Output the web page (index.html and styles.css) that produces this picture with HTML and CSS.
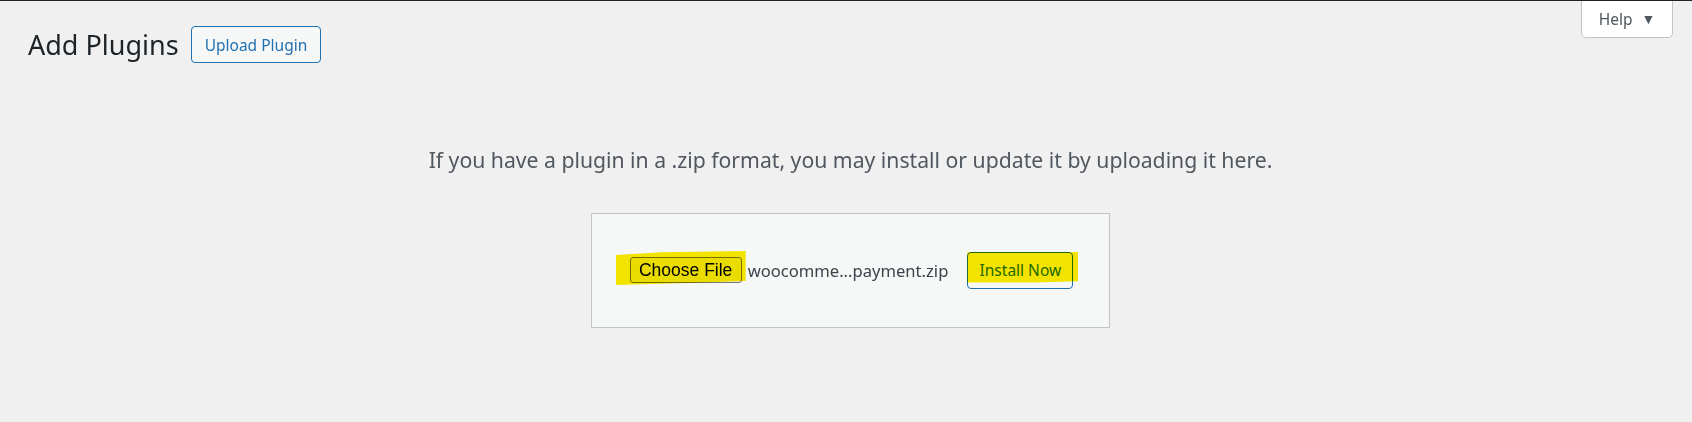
FILE: index.html
```html
<!DOCTYPE html>
<html lang="en">

<head>
    <meta charset="UTF-8">
    <meta name="viewport" content="width=device-width, initial-scale=1.0">
    <title>Add Plugins</title>
    <link rel="stylesheet" href="styles.css">
</head>

<body>
    <div class="admin_bar"></div>
    <main class="wrap">
        <div class="top_row">
            <div class="title_group">
                <h1 class="page_title">Add Plugins</h1>
                <a class="title_action" href="#">Upload Plugin</a>
            </div>
            <button class="help_tab">Help <span class="arrow">&#9660;</span></button>
        </div>
        <p class="install_help">If you have a plugin in a .zip format, you may install or update it by uploading it here.</p>
        <div class="upload_form">
            <span class="mark_wrap">
                <button class="choose_file">Choose File</button>
                <span class="marker marker_file"></span>
            </span>
            <span class="file_name">woocomme...payment.zip</span>
            <span class="mark_wrap">
                <button class="install_now">Install Now</button>
                <span class="marker marker_install"></span>
            </span>
        </div>
    </main>
</body>

</html>
```

FILE: styles.css
```css
html {
    margin: 0;
    padding: 0;
    background-color: #f0f0f1;
}

body {
    margin: 0;
    font-family: "Noto Sans", "Open Sans", sans-serif;
    color: #3c434a;
}

.admin_bar {
    height: 1px;
    background-color: #1d2327;
}

.wrap {
    padding: 0 19px 0 28px;
}

.top_row {
    display: flex;
    justify-content: space-between;
    align-items: flex-start;
}

.title_group {
    display: flex;
    align-items: center;
    gap: 12px;
    margin-top: 25px;
}

.page_title {
    margin: 0;
    font-size: 27px;
    font-weight: 400;
    color: #1d2327;
    line-height: 37px;
}

.title_action {
    display: inline-flex;
    align-items: center;
    box-sizing: border-box;
    height: 37px;
    padding: 0 13px;
    font-size: 15.5px;
    color: #2271b1;
    text-decoration: none;
    background-color: #f6f7f7;
    border: 1px solid #2271b1;
    border-radius: 4px;
}

.help_tab {
    box-sizing: border-box;
    width: 92px;
    height: 37px;
    padding: 0;
    font-family: inherit;
    font-size: 15.5px;
    color: #50575e;
    background-color: #fff;
    border: 1px solid #c3c4c7;
    border-top: 0;
    border-radius: 0 0 5px 5px;
}

.help_tab .arrow {
    margin-left: 5px;
    font-size: 14px;
    color: #50575e;
    vertical-align: 1px;
}

.install_help {
    margin: 82px 0 0;
    text-align: center;
    font-size: 21.2px;
    line-height: 30px;
    color: #50575e;
}

.upload_form {
    display: flex;
    align-items: center;
    width: fit-content;
    margin: 38px auto 0;
    padding: 37px 36px 38px 38px;
    background-color: #f6f7f7;
    border: 1px solid #c3c4c7;
    height: 38px;
}

.mark_wrap {
    position: relative;
    display: inline-flex;
}

.choose_file {
    box-sizing: border-box;
    width: 112px;
    height: 26px;
    padding: 0;
    font-family: "Liberation Sans", Arial, sans-serif;
    font-size: 17.5px;
    color: #000;
    background-color: #efefef;
    border: 1px solid #767676;
    border-radius: 3px;
}

.file_name {
    margin: 0 19px 0 6px;
    font-size: 16.6px;
    color: #3c434a;
}

.install_now {
    box-sizing: border-box;
    width: 106px;
    height: 37px;
    padding: 0;
    font-family: inherit;
    font-size: 15.5px;
    color: #2271b1;
    background-color: #f6f7f7;
    border: 1px solid #2271b1;
    border-radius: 4px;
}

/* highlighter strokes drawn over the form */
.marker {
    position: absolute;
    background-color: #fbeb00;
    mix-blend-mode: multiply;
    pointer-events: none;
}

.marker_file {
    left: -14px;
    right: -4px;
    top: -6px;
    bottom: -2px;
    clip-path: polygon(0 12%, 35% 4%, 100% 0, 100% 88%, 55% 94%, 0 100%);
}

.marker_install {
    left: 0;
    right: -5px;
    top: 0;
    bottom: 6px;
    clip-path: polygon(0 0, 100% 0, 100% 96%, 60% 100%, 0 100%);
}
```
